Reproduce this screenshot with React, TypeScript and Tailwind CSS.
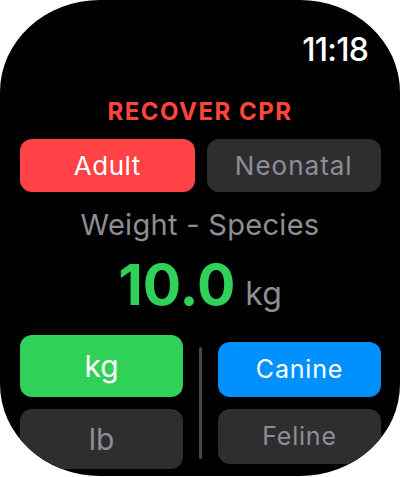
export default function App() {
  return (
    <div className="w-[400px] h-[477px] bg-white" style={{ fontFamily: 'Inter, "Noto Sans", sans-serif' }}>
      <div className="h-[476px] bg-black rounded-[100px_/_92px] overflow-hidden flex flex-col">
        {/* status bar */}
        <div className="flex justify-end pt-[32px] pr-[32px]">
          <span className="text-white text-[32px] font-medium leading-[36px] tracking-tight">11:18</span>
        </div>

        <div className="mt-[30px] text-center text-[#ff453a] text-[24px] font-bold leading-[28px] tracking-[1.5px]">RECOVER CPR</div>

        {/* patient type */}
        <div className="mt-[13px] flex gap-[12px] px-[20px] pr-[19px]">
          <button className="flex-1 h-[53px] rounded-[12px] bg-[#ff4245] text-white text-[26px] tracking-[0.5px]">Adult</button>
          <button className="flex-1 h-[53px] rounded-[12px] bg-[#2e2e31] text-[#8e8e93] text-[26px] tracking-[1px]">Neonatal</button>
        </div>

        <div className="mt-[16px] text-center text-[#8e8e93] text-[29px] leading-[34px] tracking-[0.3px]">Weight - Species</div>

        <div className="mt-[15px] flex justify-center items-baseline gap-[10px]">
          <span className="text-[#30d158] text-[57px] font-bold leading-[56px]">10.0</span>
          <span className="text-[#8e8e93] text-[32px] leading-[32px]">kg</span>
        </div>

        {/* units + species */}
        <div className="mt-[22px] flex px-[20px] pr-[19px]">
          <div className="w-[163px] flex flex-col gap-[12px]">
            <button className="h-[62px] rounded-[12px] bg-[#30d158] text-white text-[30px]">kg</button>
            <button className="h-[60px] rounded-[12px] bg-[#2e2e31] text-[#8e8e93] text-[30px]">lb</button>
          </div>
          <div className="flex-1 flex justify-center pt-[12px]">
            <div className="w-[3px] h-[112px] bg-[#48484a] rounded-full" />
          </div>
          <div className="w-[163px] flex flex-col gap-[12px] pt-[7px]">
            <button className="h-[55px] rounded-[12px] bg-[#0091ff] text-white text-[25px] tracking-[0.8px]">Canine</button>
            <button className="h-[55px] rounded-[12px] bg-[#2e2e31] text-[#8e8e93] text-[25px] tracking-[0.8px]">Feline</button>
          </div>
        </div>
      </div>
    </div>
  );
}
